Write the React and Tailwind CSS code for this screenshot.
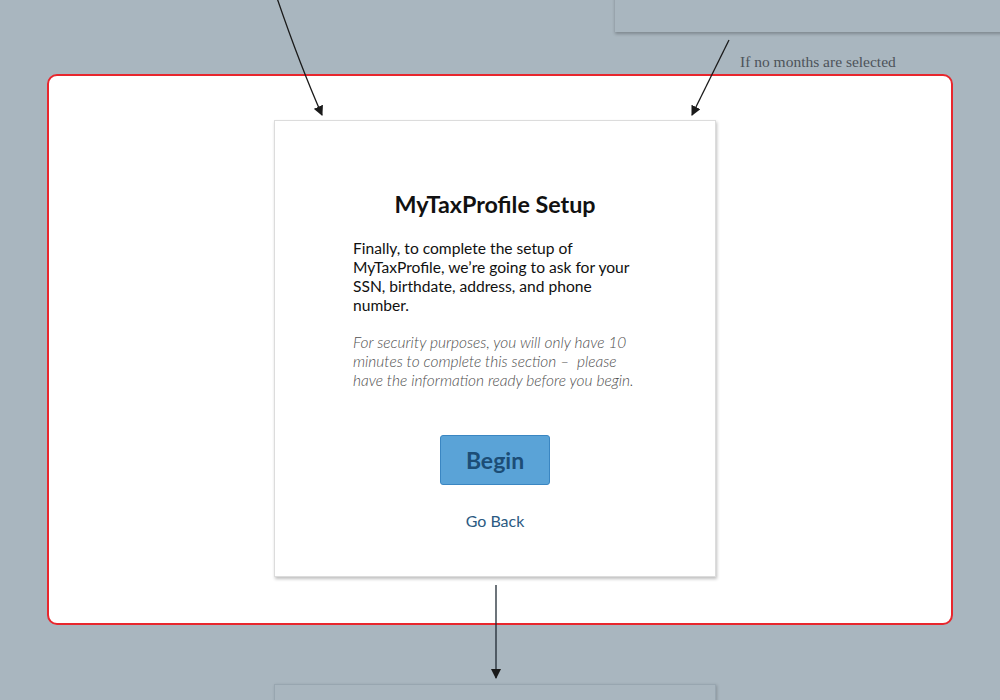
export default function App() {
  return (
    <div className="relative h-[700px] w-[1000px] overflow-hidden bg-[#a9b6bf]">
      {/* top right node (cut off) */}
      <div className="absolute left-[615px] top-[-20px] h-[52px] w-[420px] bg-[#a9b6bf] shadow-[0_2px_3px_rgba(0,0,0,0.25)]" />
      <p
        className="absolute left-[740px] top-[50px] text-[15.5px] text-[#4d535a]"
        style={{ fontFamily: '"Liberation Serif", serif' }}
      >
        If no months are selected
      </p>

      <div className="pt-[74px] pl-[47px]">
        <div className="h-[551px] w-[906px] rounded-[10px] border-2 border-[#e8262d] bg-white pt-[44px] pl-[225px]">
          <div
            className="flex h-[457px] w-[442px] flex-col items-center border border-[#dcdcdc] bg-white pt-[68px] shadow-[1px_2px_3px_rgba(0,0,0,0.25)]"
            style={{ fontFamily: 'Lato, "Open Sans", sans-serif' }}
          >
            <h1 className="text-[23.3px] font-bold leading-[30px] text-[#111]">MyTaxProfile Setup</h1>
            <div className="mt-[20px] w-[290px] self-start ml-[78px]">
              <p className="text-[15.6px] leading-[19px] text-[#111]">
                Finally, to complete the setup of MyTaxProfile, we’re going to ask for your SSN, birthdate, address, and phone number.
              </p>
              <p className="mt-[18px] text-[15.5px] font-light italic leading-[19px] text-[#4f4f4f]">
                For security purposes, you will only have 10 minutes to complete this section –&nbsp; please have the information ready before you begin.
              </p>
            </div>
            <button className="mt-[45px] h-[50px] w-[110px] rounded-[3px] border border-[#3a86c2] bg-[#5aa3d7] text-[23px] font-bold text-[#1c4d76]">
              Begin
            </button>
            <button className="mt-[24px] text-[16px] text-[#2b5a82]">Go Back</button>
          </div>
        </div>
      </div>

      {/* bottom node */}
      <div className="absolute left-[274px] top-[684px] h-[40px] w-[442px] border border-[#98a6b0] bg-[#a9b6bf] shadow-[1px_1px_3px_rgba(0,0,0,0.2)]" />

      {/* arrows */}
      <svg className="pointer-events-none absolute left-0 top-0" width="1000" height="700">
        <defs>
          <marker id="ah" markerWidth="10" markerHeight="10" refX="9" refY="5" orient="auto" markerUnits="userSpaceOnUse">
            <path d="M0,0 L10,5 L0,10 z" fill="#1a1a1a" />
          </marker>
        </defs>
        <path d="M277,-2 Q300,65 322,115" fill="none" stroke="#1a1a1a" strokeWidth="1.3" markerEnd="url(#ah)" />
        <path d="M729,40 L692,115" fill="none" stroke="#1a1a1a" strokeWidth="1.3" markerEnd="url(#ah)" />
        <path d="M496,585 L496,678" fill="none" stroke="#1f2a33" strokeWidth="1.3" markerEnd="url(#ah)" />
      </svg>
    </div>
  );
}
